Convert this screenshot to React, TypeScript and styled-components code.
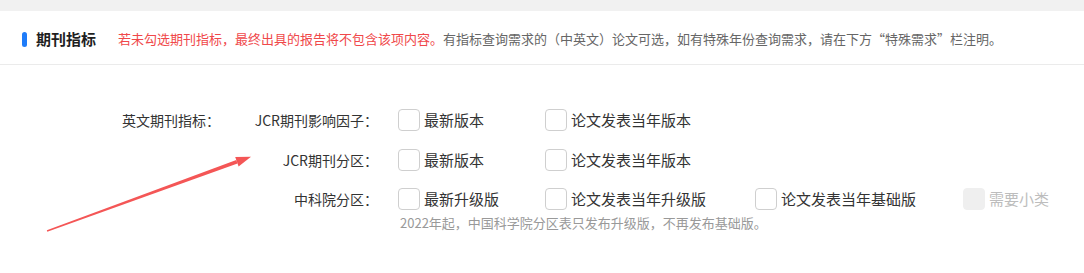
import React from "react";
import styled, { createGlobalStyle } from "styled-components";

const Global = createGlobalStyle`
  html, body { margin: 0; padding: 0; background: #fff; }
  body { font-family: "Noto Sans CJK SC", "Microsoft YaHei", sans-serif; }
  * { box-sizing: border-box; }
`;

const Page = styled.div`
  position: relative;
  width: 1084px;
  height: 273px;
  background: #fff;
  overflow: hidden;
`;

const TopStrip = styled.div`
  height: 11px;
  background: #f1f1f1;
`;

const Header = styled.div`
  height: 54px;
  padding: 3px 0 0 22px;
  display: flex;
  align-items: center;
  border-bottom: 1px solid #ebebeb;
`;

const Marker = styled.span`
  width: 5px;
  height: 15px;
  border-radius: 3px;
  background: #1f7cf9;
  margin-right: 9px;
`;

const Title = styled.h2`
  margin: 0 22px 0 0;
  font-size: 15px;
  font-weight: 700;
  color: #1f1f1f;
  line-height: 20px;
`;

const Note = styled.p`
  margin: 0;
  font-size: 13px;
  line-height: 18px;
  color: #666;
`;

const Warn = styled.span`
  color: #f0484a;
`;

const Form = styled.div`
  display: grid;
  grid-template-columns: 220px 178px 147px 210px 208px auto;
  grid-template-rows: 40px 40px 38px auto;
  padding-top: 35px;
  align-items: center;
`;

const GroupLabel = styled.div`
  grid-column: 1;
  text-align: right;
  font-size: 14px;
  line-height: 20px;
  color: #333;
`;

const FieldLabel = styled.div`
  grid-column: 2;
  text-align: right;
  padding-right: 20px;
  font-size: 14px;
  line-height: 20px;
  color: #333;
`;

const Option = styled.label<{ $disabled?: boolean }>`
  display: inline-flex;
  align-items: center;
  gap: 4px;
  font-size: 15px;
  line-height: 22px;
  color: ${(p) => (p.$disabled ? "#bdbdbd" : "#333")};
  cursor: ${(p) => (p.$disabled ? "not-allowed" : "pointer")};
  white-space: nowrap;
`;

const Box = styled.input`
  appearance: none;
  -webkit-appearance: none;
  margin: 0;
  width: 22px;
  height: 22px;
  border-radius: 4px;
  border: 1px solid #cfcfcf;
  background: #fff;
  flex: none;
  &:disabled {
    background: #efefef;
    border-color: #efefef;
  }
`;

const Hint = styled.div`
  grid-column: 3 / -1;
  align-self: start;
  margin-top: -4px;
  padding-left: 2px;
  font-size: 13px;
  line-height: 18px;
  color: #999;
`;

const Arrow = styled.svg`
  position: absolute;
  left: 0;
  top: 0;
  pointer-events: none;
`;

type Opt = { text: string; disabled?: boolean };

const CheckOption = ({ text, disabled }: Opt) => (
  <Option $disabled={disabled}>
    <Box type="checkbox" disabled={disabled} />
    {text}
  </Option>
);

export default function App() {
  return (
    <Page>
      <Global />
      <TopStrip />
      <Header>
        <Marker />
        <Title>期刊指标</Title>
        <Note>
          <Warn>若未勾选期刊指标，最终出具的报告将不包含该项内容。</Warn>
          有指标查询需求的（中英文）论文可选，如有特殊年份查询需求，请在下方“特殊需求”栏注明。
        </Note>
      </Header>
      <Form>
        <GroupLabel>英文期刊指标：</GroupLabel>
        <FieldLabel>JCR期刊影响因子：</FieldLabel>
        <CheckOption text="最新版本" />
        <CheckOption text="论文发表当年版本" />

        <FieldLabel>JCR期刊分区：</FieldLabel>
        <CheckOption text="最新版本" />
        <CheckOption text="论文发表当年版本" />

        <FieldLabel>中科院分区：</FieldLabel>
        <CheckOption text="最新升级版" />
        <CheckOption text="论文发表当年升级版" />
        <CheckOption text="论文发表当年基础版" />
        <CheckOption text="需要小类" disabled />

        <Hint>2022年起，中国科学院分区表只发布升级版，不再发布基础版。</Hint>
      </Form>
      <Arrow width="1084" height="273" viewBox="0 0 1084 273">
        <polygon points="46.8,230.3 47.3,231.7 237.5,163.5 236.3,160.1" fill="#f45656" />
        <polygon points="251,156.8 235.2,156.9 238.6,166.6" fill="#f45656" />
      </Arrow>
    </Page>
  );
}
